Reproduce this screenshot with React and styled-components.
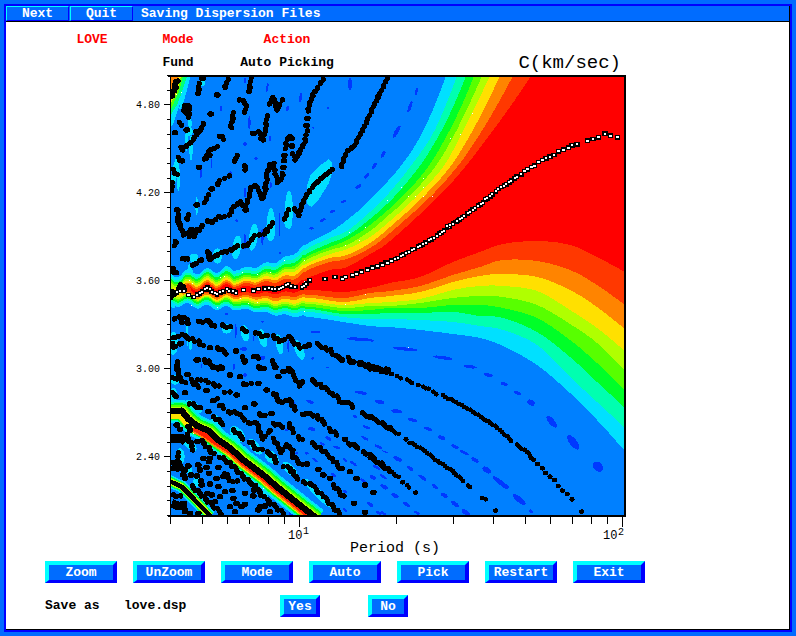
import React from "react";
import styled, { createGlobalStyle } from "styled-components";

const GlobalStyle = createGlobalStyle`
  * { box-sizing: border-box; }
  body { margin: 0; background: #006cff; }
`;

const mono = `"Liberation Mono", monospace`;

const Frame = styled.div`
  min-height: 100vh;
  padding: 4px;
  background: #006cff;
  font: bold 13px/16px ${mono};
  color: #000;
  display: flex;
`;
const Win = styled.main`
  flex: 1;
  min-width: 0;
  border: 2px solid #0000ff;
  background: #fff;
  box-shadow: inset -1px -1px 0 #000;
  padding: 0 1px 1px 0;
  display: flex;
  flex-direction: column;
`;
const TitleBar = styled.header`
  display: flex;
  align-items: stretch;
  height: 16px;
  gap: 1px;
  background: #006cff;
  border-bottom: 1px solid #000;
  color: #fff;
`;
const MenuButton = styled.button`
  width: 63px;
  padding: 0;
  border: 1px solid;
  border-color: #00ffff #0000ff #0000ff #00ffff;
  background: #006cff;
  color: #fff;
  font: bold 13px/13px ${mono};
`;
const Title = styled.h1`
  margin: 0 0 0 7px;
  font: bold 13px/15px ${mono};
`;
const Status = styled.section`
  display: grid;
  grid-template-columns: 86px 86px 132px 1fr;
  grid-auto-rows: 23px;
  align-items: center;
  text-align: center;
  padding: 6px 168px 0 43px;
`;
const Heading = styled.span`
  color: #ff0000;
`;
const Value = styled.span`
  grid-column: ${(p) => p.$column};
`;
const PlotTitle = styled.span`
  grid-column: 4;
  text-align: right;
  font: 19px/22px ${mono};
`;
const Chart = styled.svg`
  display: block;
  width: 100%;
  height: auto;
  shape-rendering: crispEdges;
`;
const AxisText = styled.text`
  font-family: ${mono};
  font-weight: 400;
  font-size: ${(p) => p.$size}px;
  fill: #000;
`;
const ButtonRow = styled.nav`
  display: flex;
  flex-wrap: wrap;
  gap: 16px;
  padding: 5px 39px 12px;
`;
const BevelButton = styled.button`
  width: ${(p) => (p.$small ? 40 : 72)}px;
  height: 22px;
  padding: 0;
  border: solid;
  border-width: 4px 4px 3px;
  border-color: #00ffff #0000ff #0000ff #00ffff;
  background: #006cff;
  color: #fff;
  font: bold 13px/15px ${mono};
`;
const SaveRow = styled.section`
  display: grid;
  grid-template-columns: 79px 156px 88px 40px;
  align-items: center;
  padding: 0 39px 11px;
`;

/* ---- filled contours of the main ridge: upper and lower edge per level ---- */
const ux = [170, 190, 207, 227, 247, 280, 297, 310, 330, 347];
const lx = [170, 207, 247, 280, 310, 343, 370, 390, 420, 453, 480, 503, 537, 570, 597, 625];
const levels = [
  { c: "#00e0ff", s: 170, u: [276, 272, 271, 269, 268, 260, 251, 242, 232, 220], t: [[370, 200], [400, 167], [420, 137], [434, 107], [446, 76]],
    l: [304, 307, 310, 315, 317, 322, 326, 327, 330, 334, 338, 346, 365, 393, 420, 451] },
  { c: "#00ffb0", s: 170, u: [279, 275, 273, 272, 271, 264, 256, 247, 238, 231], t: [[370, 212], [389, 193], [410, 167], [431, 137], [445, 107], [457, 76]],
    l: [302, 304, 308, 312, 312, 317, 319, 319, 320, 322, 326, 330, 345, 377, 402, 428] },
  { c: "#00ff28", s: 170, u: [281, 277, 275, 274, 274, 267, 260, 252, 243, 236], t: [[370, 219], [394, 197], [419, 167], [438, 137], [453, 107], [466, 76]],
    l: [300, 302, 306, 309, 309, 314, 314, 313, 313, 312, 316, 318, 332, 357, 382, 408] },
  { c: "#58ff00", s: 170, u: [283, 279, 277, 277, 276, 270, 263, 255, 247, 240], t: [[370, 225], [402, 197], [428, 167], [446, 137], [461, 107], [474, 76]],
    l: [298, 300, 304, 307, 307, 311, 310, 308, 308, 305, 305, 308, 318, 340, 363, 390] },
  { c: "#b0ff00", s: 170, u: [285, 281, 279, 279, 278, 272, 266, 258, 250, 245], t: [[370, 231], [390, 214], [409, 197], [435, 167], [453, 137], [468, 107], [482, 76]],
    l: [296, 299, 302, 305, 304, 308, 306, 306, 303, 298, 296, 297, 305, 324, 343, 371] },
  { c: "#ffe000", s: 172, u: [287, 283, 281, 281, 280, 275, 269, 262, 254, 249], t: [[370, 237], [390, 221], [416, 197], [443, 167], [460, 137], [475, 107], [490, 76]],
    l: [294, 298, 300, 303, 302, 305, 303, 302, 299, 290, 286, 286, 291, 310, 328, 351] },
  { c: "#ff8400", s: 181, u: [289, 285, 283, 283, 282, 278, 273, 265, 258, 255], t: [[370, 243], [390, 227], [423, 197], [450, 167], [469, 137], [485, 107], [500, 76]],
    l: [294, 297, 298, 300, 298, 302, 298, 296, 292, 282, 276, 274, 277, 290, 307, 329] },
  { c: "#ff3800", s: 184, u: [290, 287, 285, 285, 284, 281, 277, 269, 262, 259], t: [[370, 248], [390, 233], [430, 197], [457, 167], [478, 137], [496, 107], [513, 76]],
    l: [293, 295, 296, 297, 295, 298, 293, 291, 286, 275, 267, 260, 261, 270, 285, 305] },
  { c: "#ff0000", s: 190, u: [291, 289, 287, 287, 287, 285, 283, 277, 270, 267], t: [[370, 254], [390, 241], [438, 197], [465, 167], [488, 137], [510, 107], [531, 76]],
    l: [292, 292, 293, 293, 290, 292, 288, 283, 277, 262, 252, 244, 241, 245, 257, 272] },
];

function smooth(pts, step = 2) {
  const out = [];
  for (let i = 0; i < pts.length - 1; i++) {
    const a = pts[Math.max(0, i - 1)], b = pts[i], c = pts[i + 1], d = pts[Math.min(pts.length - 1, i + 2)];
    const n = Math.max(1, Math.round(Math.hypot(c[0] - b[0], c[1] - b[1]) / step));
    for (let k = 0; k < n; k++) {
      const t = k / n;
      out.push([0, 1].map((j) =>
        0.5 * (2 * b[j] + (c[j] - a[j]) * t + (2 * a[j] - 5 * b[j] + 4 * c[j] - d[j]) * t * t +
          (3 * b[j] - a[j] - 3 * c[j] + d[j]) * t * t * t)));
    }
  }
  out.push(pts[pts.length - 1]);
  return out;
}
function bandPath({ s, u, t, l }) {
  const wave = (x) => {
    const base = Math.cos((2 * Math.PI * (x - 207)) / 19.5);
    return x < 235 ? 3 * base : x < 304 ? 1.5 * base : 0;
  };
  const up = smooth([...ux.map((x, i) => [x, u[i]]), ...t]).filter((p) => p[0] >= s).map(([x, y]) => [x, y - wave(x)]);
  const low = smooth(lx.map((x, i) => [x, l[i]])).filter((p) => p[0] >= s).map(([x, y]) => [x, y - 0.8 * wave(x)]);
  const all = [...up, [626, 76], ...low.reverse()];
  return "M" + all.map(([x, y]) => `${x.toFixed(1)} ${y.toFixed(1)}`).join("L") + "Z";
}

/* ---- digitised ridges; each tile holds coordinates in thirds of a unit ---- */
const parse = (s) => s.trim().split(/\s*;\s*/).filter(Boolean).map((l) => l.split(/\s+/).map((p) => p.split(",").map(Number)));

function dots(lines, step, spread = 1) {
  let d = "";
  lines.forEach((pts) => {
    if (pts.length === 1) d += `M${pts[0][0] - spread} ${pts[0][1]}h${2 * spread}`;
    for (let i = 0; i < pts.length - 1; i++) {
      const [x, y] = pts[i], [X, Y] = pts[i + 1];
      const n = Math.max(1, Math.round(Math.hypot(X - x, Y - y) / step));
      for (let k = i ? 1 : 0; k <= n; k++) {
        const j = (((i * 7 + k * 5 + Math.round(x)) % 3) - 1) * spread;
        d += `M${(x + ((X - x) * k) / n + j).toFixed(0)} ${(y + ((Y - y) * k) / n - j).toFixed(0)}h.1`;
      }
    }
  });
  return d;
}

const tiles = [
  { x: 130, y: 70, lines: `580,28 570,42 550,72 542,95 533,125;532,145;530,166;530,185 525,215 512,240 497,268 490,250;486,228;485,208 480,200 470,210 466,236;463,256;462,272;460,292;459,308 455,325 442,338 437,310 430,282 418,285 412,310 407,350 403,380 393,388 388,360 378,345 365,350 357,380 347,408 330,398 312,410 298,435;283,440 265,442 248,455;235,454;212,473 200,478;347,420;
    770,28 750,70 735,100 715,145 695,185 672,228 650,245 643,265 633,292;605,300 580,320 552,345 530,375 515,405 505,438 495,415;475,420 463,447;425,462 410,478;
    218,25;208,40 204,70;293,30 284,55;362,25 357,65;262,75;330,88 350,103 345,125;420,100 428,82 438,105 443,118 455,92;310,128 303,175;165,105 178,110 175,142 164,120;150,155 153,168;135,188;170,180;
    222,158 212,180 195,200 185,215 165,232 155,230 160,238;200,185;242,132;410,140 407,175 398,212 385,185 365,192;270,197 280,208;260,232 245,237;233,248 225,265 238,258;207,292;320,258 315,272;345,285 345,300;145,262 155,275;
    130,298 140,315;125,340 127,360;296,320 284,325;268,332 262,345;245,357;235,375 223,398;200,405;142,420;143,435 145,458 155,475;175,435 170,450;185,478;136,35 132,60 125,80 142,35 130,72` },
  { x: 130, y: 220, lines: `425,10 415,30 405,40;388,45 375,45 362,62 350,78 340,78;320,80 300,92 275,98 255,108 240,118 232,95;
    145,0 152,25 160,45 175,38 190,52 195,40;210,30 215,18;180,48 190,34;230,5 250,3;138,62 133,77;155,118 175,115;185,138 200,128 215,120;130,145 138,160 126,150;123,232 140,218 153,192 165,208;125,215;128,225;
    135,295 165,290;152,300 155,308;172,298 172,313;203,306 235,303 252,320;275,317 300,322;335,328 350,333;378,337 395,350 412,347;430,347 448,365 475,352 495,370 510,384;525,380;537,375;560,372 585,385 600,390 615,408 637,420;655,412 670,428;692,428;705,433 720,440;740,445 775,450;
    128,355 155,345 185,358 205,365 218,378;130,382 155,370;126,370;240,383;262,383 290,400;318,393;335,412 345,425;372,408 385,415;425,425 437,440;142,430 142,450;203,420;225,418 235,425;250,440 278,443;390,443;478,447` },
  { x: 130, y: 360, lines: `140,8 145,45;200,0;228,5 250,20 275,28;300,45;330,50;340,72 362,72;385,70;410,90;345,3;385,20 400,28;425,5 440,20;460,35;445,50;475,25 495,50 508,78 518,65;
    545,62 570,75 600,95 625,115 635,130 655,128 668,142;636,0;658,3 665,6;690,12;708,18;728,22 745,27;768,34;695,160 730,175 780,205;125,55 150,55 165,70;173,43;182,60 205,82;230,92;202,60 215,58 235,68;250,72 265,80;285,95 298,98;320,105;
    125,100 140,108;165,98;180,130 210,145;247,122 260,118;270,135 280,145;295,155 320,160 345,178;432,100 450,128 480,118 495,150;345,143;373,132;388,162 403,168;425,160;515,165 535,158 560,170 585,190;598,205 620,225;645,238;655,250 685,262;700,275 735,295;747,305 780,335;
    235,155;250,170 280,192;355,188 380,190 390,220 400,235 420,212;430,190 460,200;478,192 490,218;505,230 515,240;430,235 445,262 455,275 470,255 485,265 490,290 515,315;531,312;545,250 570,265 600,290 635,328;660,335;680,355;705,375;730,397;672,430;705,457;565,328;580,345;600,355;610,375 640,410;
    310,210 340,235;360,245 375,262 395,270;410,278 425,285 440,305;462,318 480,325 492,345 505,355;520,365 545,375 580,410 628,460;140,195;150,208;175,200;180,210;170,225 190,268;203,245;215,243 235,265 250,282;220,295;240,295;237,305;270,290 300,310 320,330 345,355 375,378 400,412;
    143,280 145,310 165,332 150,320 130,305 140,330;175,318;125,325;160,345;165,355;183,345;205,315;210,330;200,348;213,362;230,322;237,340;265,322;260,355;280,350;240,372;265,380;285,340 300,360 320,365;215,375;185,380 210,400 240,430 275,460;232,400;245,405;285,395;307,392;310,415;300,440;315,455;345,400;372,390;345,433;335,440;320,430;370,408;130,405 150,410;270,410;255,425;390,440;385,450;410,420 430,435 460,460;405,438;420,455;180,460;205,460;165,455` },
  { x: 370, y: 370, lines: `0,-2;15,0;35,6;50,8;65,12;80,20 92,25;110,30 127,38;145,45;160,50 175,57;190,65 200,72;218,77 250,92 300,120 340,145 375,168 425,212;440,225 470,245 490,270;503,282;517,295;527,309;540,320;554,330;565,348;577,362;592,372;606,388;635,425;
    0,142 35,162 85,193;108,208;120,218 165,242 195,268 240,298 280,332;293,348 300,352;335,385 347,388;377,422;0,262 40,292;52,298 85,322;98,337;112,346 118,352;137,368;10,367` },
];

/* x, y, rx, ry, angle */
const dashes = [
  { x: 370, y: 370, e: `30,97,14,5,10;80,124,16,6,5;128,150,14,5,15;175,177,13,5,20;215,203,12,6,20;255,230,12,5,25;283,248,14,4,25;315,270,12,6,30;350,300,14,8,35;388,335,24,7,38;405,348,12,7,30;447,388,25,8,40;483,424,7,5,40;355,15,14,5,10;403,42,11,5,15;442,69,11,5,20;483,98,12,8,30;545,155,22,9,50;610,217,26,11,52;684,290,17,13,50;25,230,12,4,25;45,245,9,2,20;83,267,14,6,25;120,295,12,5,35;157,323,14,5,35;195,350,11,5,40;223,376,11,6,30;255,402,14,6,35;287,427,14,7,35;8,322,10,6,30;40,350,11,5,45;75,377,12,6,30;110,403,12,5,35;140,428,10,4,30;25,428,9,4,30` },
  { x: 130, y: 70, e: `660,42,6,19,0;345,32,3,9,0;412,52,3,13,10;512,82,4,14,10;273,117,3,9,0;358,158,4,19,0;420,207,3,9,0;473,115,5,8,20;345,222,5,7,0;213,310,2,17,0;245,282,2,14,0;760,252,5,11,25;733,287,5,10,30;710,318,5,10,45;685,350,5,10,60;640,395,8,4,-20;608,424,8,4,-20;578,450,10,4,-20;545,475,7,4,0;345,367,3,15,0;320,452,4,4,0;448,455,2,28,0;595,114,3,3,0;550,173,3,3,0;235,240,3,6,0;302,310,4,6,0;378,266,5,4,0;422,345,3,10,0` },
  { x: 130, y: 220, e: `345,65,3,25,0;397,50,4,25,0;448,25,2,25,0;557,336,16,3,0;690,358,40,5,4;317,333,3,23,0;475,378,3,18,0;370,355,2,8,0;290,282,5,3,0;398,305,5,3,0;342,387,11,5,0;397,413,9,6,0;215,438,2,8,0;545,25,7,4,0;548,415,4,4,0;450,98,3,4,0;592,442,4,2,0;575,3,8,2,0` },
  { x: 130, y: 360, e: `693,98,19,5,10;748,125,15,5,10;540,125,12,5,20;545,207,11,5,10;595,235,10,5,30;705,235,12,4,30;710,202,12,4,20;620,262,10,4,15;675,170,8,4,20;577,252,8,4,20;670,310,12,4,35;645,395,8,4,30;720,433,12,5,35;700,362,10,4,35;760,350,12,4,35;765,380,10,4,30;610,345,10,4,40;530,430,9,4,30;645,450,7,4,30;485,460,8,6,0;555,300,10,4,40;645,300,8,4,40;740,322,12,4,30;760,460,10,4,30;530,280,6,4,0;490,130,6,4,0;345,45,5,8,0;312,20,2,12,0;592,22,4,2,0;470,210,6,4,20;500,280,5,3,0;260,383,3,6,0;342,260,2,8,0` },
  { x: 370, y: 220, e: `105,387,38,5,6;218,413,30,5,8;300,440,20,5,8;355,465,14,4,10;5,362,7,3,0` },
  { x: 370, y: 40, e: `139,155,4,11,10;120,200,5,18,20;80,275,6,21,30;38,343,4,11,25;12,380,4,8,30` },
];
const halos = [
  { x: 130, y: 70, e: `477,420,12,57,0;423,462,12,48,0;372,482,9,20,0;200,408,4,27,0;170,210,4,35,0;183,235,5,38,0;135,305,9,45,10;145,325,5,38,0;178,185,10,12,0;218,40,8,8,0;165,60,6,60,15;180,160,5,20,0` },
  { x: 130, y: 220, e: `422,30,14,34,0;370,52,13,40,8;320,82,13,36,8;262,108,14,23,0;475,8,12,18,0;345,340,12,25,-10;398,355,12,28,-15;448,373,10,31,-10;508,390,13,31,-20;290,327,15,14,0;180,160,8,30,0;192,115,14,14,0;130,370,14,35,0;182,375,5,15,0;172,340,3,40,0;130,225,12,40,0` },
  { x: 130, y: 360, e: `130,105,12,22,0;135,60,14,14,0;190,140,30,14,35;262,182,25,12,40;322,222,28,17,45;375,260,29,13,50;425,292,25,16,45;480,328,29,13,45;565,400,60,12,46;180,255,24,12,40;150,290,14,25,0;200,365,10,16,0;400,405,14,12,0;175,330,12,8,0` },
];

function Ellipses({ tile, fill }) {
  return (
    <g transform={`translate(${tile.x} ${tile.y}) scale(.3333)`} fill={fill}>
      {tile.e.split(";").map((s) => {
        const [x, y, rx, ry, a] = s.split(",").map(Number);
        return <ellipse key={s} cx={x} cy={y} rx={rx} ry={ry} transform={`rotate(${a} ${x} ${y})`} />;
      })}
    </g>
  );
}

const picks = [
  { x: 130, y: 220, lines: `140,218 150,212 163,212;176,225;192,230 210,220 232,203 245,215 262,222 290,208 318,218;340,210;370,212;385,207;405,205 445,207 460,200 475,193 495,202;515,203 530,190 538,182;585,177;615,171;637,176;647,171;668,166;680,161;694,155;712,149;728,143;742,138;755,132;768,128` },
  { x: 370, y: 220, lines: `7,143;22,139;37,134;52,128;65,122;76,117 100,104 125,90 160,72 200,48 230,25 265,0` },
  { x: 370, y: 40, lines: `230,560 260,545 300,515 340,487;346,478 360,470 385,447 410,432 440,410 453,404;463,393;473,388;485,381;494,377;505,366;517,360;528,355;540,350;552,345;566,334;580,329;595,323;606,316;621,313;653,302;669,297;686,292;705,281;722,287;742,292` },
];

const ridge = "M110 153L155 152L175 177L200 197L235 212L260 237L300 264L340 300L400 345L440 380L490 420L560 475";
const ridgeLayers = [
  ["#00e0ff", 68, 2], ["#00ffb0", 57, 2], ["#00ff28", 50, 3], ["#58ff00", 42, 4], ["#b0ff00", 36, 6], ["#ffe000", 31, 8],
];
const ridgeHot = "M190 205L220 222L260 250L300 274L340 310L400 355L440 390L490 430L535 468";
const ridge2 = "M115 362L155 380L190 415L240 468";
const specks = [[472, 113], [460, 134], [450, 138], [423, 178], [423, 187], [401, 187], [408, 196], [415, 196], [423, 196], [432, 196], [387, 200], [345, 245], [359, 240], [349, 232], [365, 227], [304, 260], [284, 260], [257, 274], [270, 272], [242, 272], [224, 276], [220, 277], [192, 283], [189, 280], [248, 303], [257, 302], [304, 311], [345, 304], [365, 294], [217, 307], [191, 305], [304, 281], [240, 298], [263, 488], [408, 347], [181, 92], [176, 94], [193, 433]];

const yTicks = Array.from({ length: 31 }, (_, k) => k);
const yLabels = ["4.80", "4.20", "3.60", "3.00", "2.40"];
const xTicks = [4, 5, 6, 7, 8, 9, 10, 20, 30, 40, 50, 60, 70, 80, 90, 100];
const px = (v) => Math.round(299 + 323 * (Math.log10(v) - 1));

function DispersionPlot() {
  return (
    <Chart viewBox="6 74 783 482" role="img" aria-label="Phase velocity C (km/sec) against period (s)">
      <defs>
        <clipPath id="area"><rect x="171" y="76" width="454" height="440" /></clipPath>
      </defs>
      <g clipPath="url(#area)">
        <rect x="170" y="75" width="456" height="442" fill="#0080ff" />
        <path d="M170 76H191L186 90L180 104L173 124L170 128Z" fill="#00e0ff" />
        <path d="M170 76H187L182 92L177 105L170 116Z" fill="#00ff78" />
        <path d="M170 76H183L179 92L170 111Z" fill="#58ff00" />
        <path d="M170 76H181L177 92L170 105Z" fill="#ffe000" />
        <path d="M170 76H178L174 92L170 99Z" fill="#ff8400" />
        {halos.map((t, i) => <Ellipses key={i} tile={t} fill="#00e0ff" />)}
        <path d="M329 159L332 163L332 173L329 183L324 191L319 199L312 207L307 204L307 186L310 176L318 167Z" fill="#00e0ff" />
        {dashes.map((t, i) => <Ellipses key={i} tile={t} fill="#0038ff" />)}
        {levels.map((l) => <path key={l.c} d={bandPath(l)} fill={l.c} />)}
        <g fill="none" strokeLinejoin="round" transform="translate(130 360) scale(.3333)">
          {ridgeLayers.map(([c, w, dy]) => <path key={c} d={ridge} stroke={c} strokeWidth={w} transform={`translate(0 ${dy})`} />)}
          <path d={ridgeHot} stroke="#ff8400" strokeWidth="24" />
          <path d={ridgeHot} stroke="#ff2000" strokeWidth="14" />
          <path d={ridge} stroke="#000" strokeWidth="19" />
          <path d={ridge2} stroke="#00e0ff" strokeWidth="36" />
          <path d={ridge2} stroke="#00ff50" strokeWidth="28" />
          <path d={ridge2} stroke="#b0ff00" strokeWidth="20" />
          <path d={ridge2} stroke="#000" strokeWidth="13" />
          <path d="M120 236H158L168 246M125 430L145 438L172 436" stroke="#000" strokeWidth="26" />
        </g>
        {tiles.map((t, i) => (
          <path key={i} transform={`translate(${t.x} ${t.y}) scale(.3333)`} d={dots(parse(t.lines), 9, i === 3 ? 1 : 2)}
            stroke="#000" strokeWidth={i === 3 ? 14 : 16} strokeLinecap="round" fill="none" />
        ))}
        {picks.map((t, i) => {
          const d = dots(parse(t.lines), i ? 10 : 9);
          return (
            <g key={i} transform={`translate(${t.x} ${t.y}) scale(.3333)`} fill="none" strokeLinecap="square">
              <path d={d} stroke="#000" strokeWidth="14" />
              <path d={d} stroke="#fff" strokeWidth="6" />
            </g>
          );
        })}
        {specks.map(([x, y], i) => <rect key={i} x={x} y={y} width="1" height="1" fill="#fff" />)}
      </g>
      <path d="M168 75H626V517H624V77H168Z" />
      <path d="M170 75H171V516H170ZM168 515H626V517H168Z" />
      {yTicks.map((k) => {
        const w = k % 6 === 2 ? 6 : 3;
        return <rect key={k} x={170 - w} y={Math.round(75 + k * 14.67)} width={w} height="1" />;
      })}
      {yLabels.map((t, i) => <AxisText key={t} $size={10} x="136" y={108 + i * 88}>{t}</AxisText>)}
      {xTicks.map((v) => <rect key={v} x={px(v)} y="516" width="1" height={v === 10 || v === 100 ? 11 : 8} />)}
      <AxisText $size={12} x="288" y="539">10</AxisText>
      <AxisText $size={10} x="303" y="534">1</AxisText>
      <AxisText $size={12} x="603" y="539">10</AxisText>
      <AxisText $size={10} x="618" y="535">2</AxisText>
      <AxisText $size={15} x="350" y="552">Period (s)</AxisText>
    </Chart>
  );
}

const actions = ["Zoom", "UnZoom", "Mode", "Auto", "Pick", "Restart", "Exit"];

export default function App() {
  return (
    <Frame>
      <GlobalStyle />
      <Win>
        <TitleBar>
          <MenuButton type="button">Next</MenuButton>
          <MenuButton type="button">Quit</MenuButton>
          <Title>Saving Dispersion Files</Title>
        </TitleBar>
        <Status>
          <Heading>LOVE</Heading>
          <Heading>Mode</Heading>
          <Heading>Action</Heading>
          <Value $column={2}>Fund</Value>
          <Value $column={3}>Auto Picking</Value>
          <PlotTitle>C(km/sec)</PlotTitle>
        </Status>
        <DispersionPlot />
        <ButtonRow>
          {actions.map((a) => <BevelButton key={a} type="button">{a}</BevelButton>)}
        </ButtonRow>
        <SaveRow>
          <span>Save as</span>
          <span>love.dsp</span>
          <BevelButton type="button" $small>Yes</BevelButton>
          <BevelButton type="button" $small>No</BevelButton>
        </SaveRow>
      </Win>
    </Frame>
  );
}
